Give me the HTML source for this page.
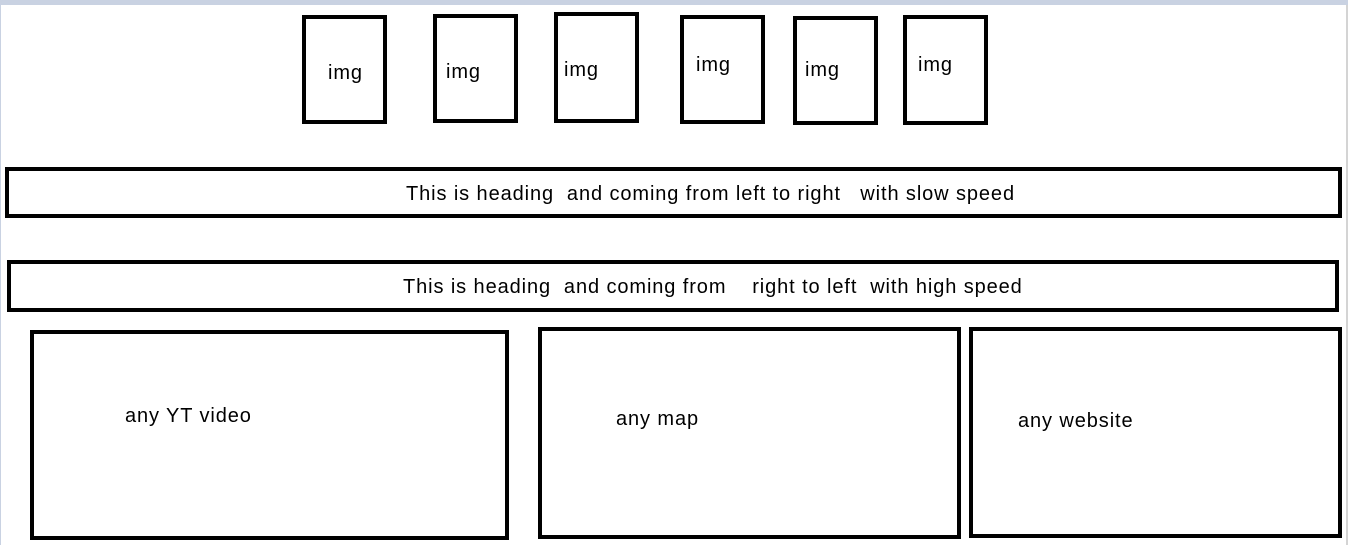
<!DOCTYPE html>
<html><head><style>
body{margin:0;width:1348px;height:545px;background:#fff;position:relative;overflow:hidden;font-family:"Liberation Sans",sans-serif;color:#000}
.b{position:absolute;border:4px solid #000;box-sizing:border-box}
.t{position:absolute;font-size:20px;letter-spacing:0.9px;white-space:pre}
</style></head><body>
<div style="position:absolute;left:0;top:0;width:1348px;height:5px;background:#c9d2e2"></div>
<div style="position:absolute;left:0;top:5px;width:1px;height:540px;background:#c9d2e2"></div>
<div style="position:absolute;left:1346px;top:5px;width:2px;height:540px;background:#d4d4d4"></div>

<div class="b" style="left:302px;top:15px;width:85px;height:109px"></div><div class="t" style="left:328px;top:62px">img</div>
<div class="b" style="left:433px;top:14px;width:85px;height:109px"></div><div class="t" style="left:446px;top:61px">img</div>
<div class="b" style="left:554px;top:12px;width:85px;height:111px"></div><div class="t" style="left:564px;top:59px">img</div>
<div class="b" style="left:680px;top:15px;width:85px;height:109px"></div><div class="t" style="left:696px;top:54px">img</div>
<div class="b" style="left:793px;top:16px;width:85px;height:109px"></div><div class="t" style="left:805px;top:59px">img</div>
<div class="b" style="left:903px;top:15px;width:85px;height:110px"></div><div class="t" style="left:918px;top:54px">img</div>

<div class="b" style="left:5px;top:167px;width:1337px;height:51px"></div>
<div class="t" style="left:406px;top:183px">This is heading  and coming from left to right   with slow speed</div>
<div class="b" style="left:7px;top:260px;width:1332px;height:52px"></div>
<div class="t" style="left:403px;top:276px">This is heading  and coming from    right to left  with high speed</div>

<div class="b" style="left:30px;top:330px;width:479px;height:210px"></div>
<div class="t" style="left:125px;top:405px">any YT video</div>
<div class="b" style="left:538px;top:327px;width:423px;height:212px"></div>
<div class="t" style="left:616px;top:408px">any map</div>
<div class="b" style="left:969px;top:327px;width:373px;height:211px"></div>
<div class="t" style="left:1018px;top:410px">any website</div>
</body></html>
